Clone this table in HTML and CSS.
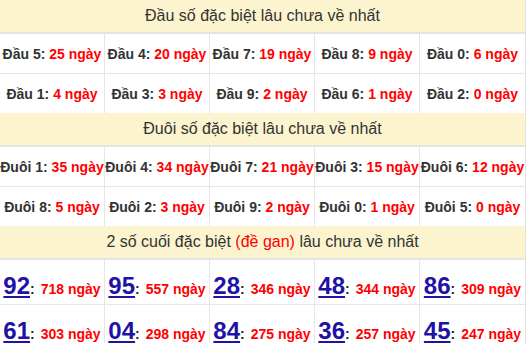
FILE: index.html
```html
<!DOCTYPE html>
<html lang="vi">
<head>
<meta charset="utf-8">
<link rel="stylesheet" href="styles.css">
</head>
<body>
<div class="board">
  <div class="head">Đầu số đặc biệt lâu chưa về nhất</div>
  <div class="grid">
    <div class="cell">Đầu 5: <span class="days">25 ngày</span></div>
    <div class="cell">Đầu 4: <span class="days">20 ngày</span></div>
    <div class="cell">Đầu 7: <span class="days">19 ngày</span></div>
    <div class="cell">Đầu 8: <span class="days">9 ngày</span></div>
    <div class="cell">Đầu 0: <span class="days">6 ngày</span></div>
    <div class="cell last">Đầu 1: <span class="days">4 ngày</span></div>
    <div class="cell last">Đầu 3: <span class="days">3 ngày</span></div>
    <div class="cell last">Đầu 9: <span class="days">2 ngày</span></div>
    <div class="cell last">Đầu 6: <span class="days">1 ngày</span></div>
    <div class="cell last">Đầu 2: <span class="days">0 ngày</span></div>
  </div>
  <div class="head">Đuôi số đặc biệt lâu chưa về nhất</div>
  <div class="grid">
    <div class="cell">Đuôi 1: <span class="days">35 ngày</span></div>
    <div class="cell">Đuôi 4: <span class="days">34 ngày</span></div>
    <div class="cell">Đuôi 7: <span class="days">21 ngày</span></div>
    <div class="cell">Đuôi 3: <span class="days">15 ngày</span></div>
    <div class="cell">Đuôi 6: <span class="days">12 ngày</span></div>
    <div class="cell last">Đuôi 8: <span class="days">5 ngày</span></div>
    <div class="cell last">Đuôi 2: <span class="days">3 ngày</span></div>
    <div class="cell last">Đuôi 9: <span class="days">2 ngày</span></div>
    <div class="cell last">Đuôi 0: <span class="days">1 ngày</span></div>
    <div class="cell last">Đuôi 5: <span class="days">0 ngày</span></div>
  </div>
  <div class="head">2 số cuối đặc biệt <span class="gan">(đề gan)</span> lâu chưa về nhất</div>
  <div class="grid big">
    <div class="cell"><a class="num" href="#">92</a><span class="colon">:</span><span class="days">718 ngày</span></div>
    <div class="cell"><a class="num" href="#">95</a><span class="colon">:</span><span class="days">557 ngày</span></div>
    <div class="cell"><a class="num" href="#">28</a><span class="colon">:</span><span class="days">346 ngày</span></div>
    <div class="cell"><a class="num" href="#">48</a><span class="colon">:</span><span class="days">344 ngày</span></div>
    <div class="cell"><a class="num" href="#">86</a><span class="colon">:</span><span class="days">309 ngày</span></div>
    <div class="cell last"><a class="num" href="#">61</a><span class="colon">:</span><span class="days">303 ngày</span></div>
    <div class="cell last"><a class="num" href="#">04</a><span class="colon">:</span><span class="days">298 ngày</span></div>
    <div class="cell last"><a class="num" href="#">84</a><span class="colon">:</span><span class="days">275 ngày</span></div>
    <div class="cell last"><a class="num" href="#">36</a><span class="colon">:</span><span class="days">257 ngày</span></div>
    <div class="cell last"><a class="num" href="#">45</a><span class="colon">:</span><span class="days">247 ngày</span></div>
  </div>
</div>
</body>
</html>
```

FILE: styles.css
```css
html, body {
  margin: 0;
  padding: 0;
  background: #fff;
}

.board {
  width: 525px;
  border-right: 1px solid #e2e2e2;
  font-family: "Liberation Sans", Arial, sans-serif;
  color: #333;
}

.head {
  height: 32px;
  line-height: 32px;
  background: #fcf3cf;
  border-bottom: 2px solid #e4e4e4;
  text-align: center;
  font-size: 16px;
  color: #333;
}

.gan {
  color: #ff0000;
}

.grid {
  display: grid;
  grid-template-columns: repeat(5, 105px);
}

.cell {
  box-sizing: border-box;
  height: 40px;
  border-right: 1px solid #e6e6e6;
  border-bottom: 1px solid #e6e6e6;
  display: flex;
  align-items: center;
  justify-content: center;
  white-space: pre;
  font-size: 14px;
  font-weight: bold;
  color: #333;
}

.cell:nth-child(5n) {
  border-right: none;
}

.cell.last {
  border-bottom: none;
  height: 39px;
}

.days {
  color: #ff0000;
}

.big .cell {
  height: 45px;
  align-items: baseline;
  padding-top: 12px;
}

.big .days {
  margin-left: 6px;
}

.num {
  font-size: 24px;
  font-weight: bold;
  color: #2112a6;
  text-decoration: underline;
}

.colon {
  color: #222;
  font-size: 14px;
}
```
